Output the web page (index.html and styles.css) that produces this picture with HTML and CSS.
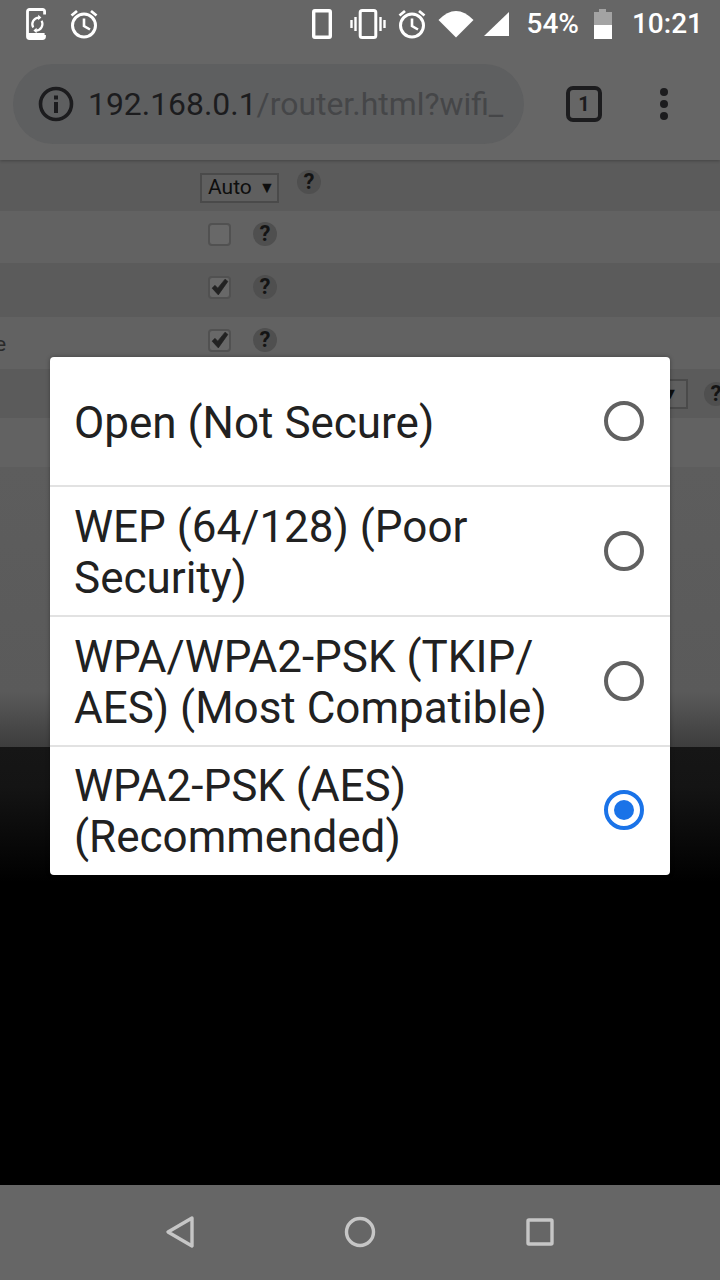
FILE: index.html
```html
<!DOCTYPE html>
<html lang="en">
<head>
<meta charset="utf-8">
<title>Router Wi-Fi security</title>
<link rel="stylesheet" href="styles.css">
</head>
<body>
<div class="screen">
  <header class="top">
    <div class="status">
      <div class="status-left">
        <svg class="ic-sync" viewBox="0 0 20 32" fill="none" stroke="#fff" stroke-width="2.8">
          <path d="M18.6 6.5V3.5a2 2 0 0 0-2-2H3.5a2 2 0 0 0-2 2v25a2 2 0 0 0 2 2h13a2 2 0 0 0 2-2v-1.5"/>
          <path d="M1.5 27.5H18.6" stroke-width="5"/>
          <path d="M7.2 19.5A6.6 6.6 0 0 1 13 9.6" stroke-width="2.2"/>
          <path d="M15.6 12.8A6.6 6.6 0 0 1 9.8 22.6" stroke-width="2.2"/>
          <path d="M12.2 6.8l3.2 2.8-3.2 2.6zM10.6 19.8l-3.2 2.8 3.2 2.6z" fill="#fff" stroke="none"/>
        </svg>
        <svg class="ic-alarm" viewBox="0 0 28 30" fill="none" stroke="#fff" stroke-width="3">
          <circle cx="14" cy="16.5" r="11.5"/>
          <path d="M14 9.5v7.5l6 3.5" stroke-width="2.6"/>
          <path d="M1.5 6.5L7 2M26.5 6.5L21 2" stroke-width="2.8"/>
        </svg>
      </div>
      <div class="status-right">
        <svg class="ic-phone" viewBox="0 0 20 30" fill="none" stroke="#fff" stroke-width="3.4">
          <rect x="1.7" y="1.7" width="16.6" height="26.6" rx="1.2"/>
        </svg>
        <svg class="ic-vibrate" viewBox="0 0 36 30" fill="none" stroke="#fff">
          <rect x="10.2" y="1.5" width="15.6" height="27" rx="2" stroke-width="3"/>
          <path d="M5.5 8v14M1.5 11v8M30.5 8v14M34.5 11v8" stroke-width="2.4"/>
        </svg>
        <svg class="ic-alarm ic-alarm-right" viewBox="0 0 28 30" fill="none" stroke="#fff" stroke-width="3">
          <circle cx="14" cy="16.5" r="11.5"/>
          <path d="M14 9.5v7.5l6 3.5" stroke-width="2.6"/>
          <path d="M1.5 6.5L7 2M26.5 6.5L21 2" stroke-width="2.8"/>
        </svg>
        <svg class="ic-wifi" viewBox="0 0 36 28" fill="#fff">
          <path d="M18 27.5L.5 10Q18-8 35.5 10Z"/>
        </svg>
        <svg class="ic-signal" viewBox="0 0 25 24" fill="#fff">
          <path d="M0 24L25 0V24Z"/>
        </svg>
        <span class="battery-text">54%</span>
        <div class="battery">
          <div class="battery-cap"></div>
          <div class="battery-empty"></div>
          <div class="battery-full"></div>
        </div>
        <span class="clock">10:21</span>
      </div>
    </div>
    <div class="toolbar">
      <div class="omnibox">
        <svg class="ic-info" viewBox="0 0 36 36" fill="none">
          <circle cx="18" cy="18" r="15.5" stroke="#1c1c1e" stroke-width="3.6"/>
          <rect x="16" y="16" width="4" height="11" fill="#1c1c1e"/>
          <rect x="16" y="9.5" width="4" height="4" fill="#1c1c1e"/>
        </svg>
        <span class="url"><span class="url-host">192.168.0.1</span>/router.html?wifi_</span>
      </div>
      <div class="tabs"><span>1</span></div>
      <div class="menu"><i></i><i></i><i></i></div>
    </div>
  </header>

  <main class="page">
    <div class="row row-a row-first">
      <span class="label label-first"></span>
      <span class="select">Auto <b>▼</b></span>
      <span class="help help-raised">?</span>
    </div>
    <div class="row row-b">
      <span class="label"></span>
      <span class="check"></span>
      <span class="help">?</span>
    </div>
    <div class="row row-a row-tall">
      <span class="label"></span>
      <span class="check"><svg class="tick" viewBox="0 0 16 16"><path d="M1 9l2.5-2.5L6 9l6.5-8L15 3 6.5 15Z"/></svg></span>
      <span class="help">?</span>
    </div>
    <div class="row row-b">
      <span class="label">e</span>
      <span class="check"><svg class="tick" viewBox="0 0 16 16"><path d="M1 9l2.5-2.5L6 9l6.5-8L15 3 6.5 15Z"/></svg></span>
      <span class="help">?</span>
    </div>
    <div class="row row-a row-low">
      <span class="label label-wide"></span>
      <span class="select select-far"><b>▼</b></span>
      <span class="help help-far">?</span>
    </div>
    <div class="row row-b row-low"></div>
    <div class="fill"></div>
  </main>

  <div class="backdrop"></div>

  <nav class="nav">
    <svg class="ic-nav" viewBox="0 0 30 34" fill="none" stroke="#c6c6c6" stroke-width="3.4" stroke-linejoin="round">
      <path d="M27 3L3 17l24 14Z"/>
    </svg>
    <svg class="ic-nav" viewBox="0 0 34 34" fill="none" stroke="#c6c6c6" stroke-width="3.4">
      <circle cx="17" cy="17" r="13.5"/>
    </svg>
    <svg class="ic-nav" viewBox="0 0 30 30" fill="none" stroke="#c6c6c6" stroke-width="3.4">
      <rect x="3" y="3" width="24" height="24" rx="1"/>
    </svg>
  </nav>

  <div class="dialog">
    <div class="option option-first">
      <span class="option-text">Open (Not Secure)</span>
      <span class="radio"></span>
    </div>
    <div class="option">
      <span class="option-text">WEP (64/128) (Poor<br>Security)</span>
      <span class="radio"></span>
    </div>
    <div class="option">
      <span class="option-text">WPA/WPA2-PSK (TKIP/<br>AES) (Most Compatible)</span>
      <span class="radio"></span>
    </div>
    <div class="option option-last">
      <span class="option-text">WPA2-PSK (AES)<br>(Recommended)</span>
      <span class="radio radio-on"></span>
    </div>
  </div>
</div>
</body>
</html>
```

FILE: styles.css
```css
* { box-sizing: border-box; }
html, body { margin: 0; padding: 0; }
body { width: 720px; height: 1280px; overflow: hidden; background: #000; font-family: Roboto, "Liberation Sans", sans-serif; }
.screen { position: relative; width: 720px; height: 1280px; display: flex; flex-direction: column; overflow: hidden; }

.top { height: 160px; flex: none; background: #666; position: relative; z-index: 1; box-shadow: 0 1px 3px rgba(0,0,0,.25); }
.status { height: 48px; display: flex; justify-content: space-between; align-items: center; padding: 0 17px 0 26px; color: #fff; }
.status-left, .status-right { display: flex; align-items: center; }
.ic-sync { width: 20px; height: 32px; margin-top: -1px; flex: none; }
.ic-alarm { width: 28px; height: 30px; margin-left: 24px; flex: none; }
.ic-alarm-right { margin-left: 12px; }
.ic-phone { width: 20px; height: 30px; flex: none; }
.ic-vibrate { width: 36px; height: 30px; margin-left: 18px; flex: none; }
.ic-wifi { width: 36px; height: 28px; margin-left: 12px; flex: none; }
.ic-signal { width: 25px; height: 24px; margin-left: 10px; flex: none; }
.battery-text { font-size: 28px; font-weight: 500; margin-left: 18px; line-height: 34px; }
.battery { width: 18px; height: 30px; margin-left: 15px; display: flex; flex-direction: column; align-items: center; }
.battery-cap { width: 7px; height: 3px; background: #a3a3a3; }
.battery-empty { width: 18px; height: 13px; background: #a3a3a3; }
.battery-full { width: 18px; height: 14px; background: #fff; }
.clock { font-size: 28px; font-weight: 500; margin-left: 20px; line-height: 34px; }

.toolbar { height: 112px; display: flex; align-items: flex-start; padding: 16px 0 0 13px; }
.omnibox { width: 511px; height: 80px; border-radius: 40px; background: #5e5f60; display: flex; align-items: center; padding-left: 25px; }
.ic-info { width: 36px; height: 36px; flex: none; }
.url { margin-left: 14px; font-size: 31.9px; color: #454648; white-space: nowrap; line-height: 40px; }
.url-host { color: #1c1c1e; }
.tabs { width: 36px; height: 36px; margin: 22px 0 0 42px; border: 4px solid #1c1c1e; border-radius: 7px; display: flex; align-items: center; justify-content: center; font-size: 20px; font-weight: 700; color: #1c1c1e; }
.menu { margin: 22px 0 0 58px; width: 8px; display: flex; flex-direction: column; gap: 4px; padding-top: 2px; }
.menu i { display: block; width: 8px; height: 8px; border-radius: 50%; background: #1c1c1e; }

.page { height: 587px; flex: none; display: flex; flex-direction: column; background: #5d5d5d; }
.row { height: 52px; flex: none; display: flex; align-items: center; padding-bottom: 6px; color: #222; }
.row-a { background: #5b5b5b; }
.row-b { background: #626262; }
.row-first { height: 51px; align-items: flex-start; padding: 13px 0 0; }
.row-tall { height: 54px; }
.row-low { height: 49px; padding-bottom: 0; }
.label { width: 208px; flex: none; font-size: 21px; color: #2a2a2a; }
.row-b .label { text-indent: -5px; padding-top: 8px; }
.label-first { width: 200px; }
.label-wide { width: 640px; }
.select { height: 30px; width: 79px; flex: none; border: 2px solid #4a4a4a; background: #5f5f5f; display: flex; align-items: center; padding: 0 0 2px 6px; font-size: 21px; color: #0e0e0e; white-space: pre; }
.select b { font-size: 16px; font-weight: 400; margin-left: 2px; }
.select-far { width: 48px; justify-content: flex-end; padding: 0 8px 0 0; }
.check { width: 23px; height: 23px; flex: none; display: flex; align-items: center; justify-content: center; border: 2px solid #515151; border-radius: 4px; background: #686868; }
.tick { width: 18px; height: 18px; flex: none; fill: #222; stroke: #222; stroke-width: .6; }
.help { width: 24px; height: 24px; flex: none; margin-left: 22px; border-radius: 50%; background: #4f4f4f; font-size: 22px; font-weight: 700; line-height: 24px; text-align: center; color: #141414; }
.help-raised { margin-left: 18px; margin-top: -3px; }
.help-far { margin-left: 16px; }
.fill { flex: 1; background: linear-gradient(#5d5d5d 0, #5a5a5a 225px, #3c3c3c 282px); }

.backdrop { flex: 1; background: linear-gradient(#161616 0, #141414 40px, #000 135px); }

.nav { height: 95px; flex: none; background: #666; display: flex; align-items: center; justify-content: space-between; padding: 0 165px 1px; }
.ic-nav { height: 34px; width: 34px; }
.nav .ic-nav:first-child { width: 30px; }
.nav .ic-nav:last-child { width: 30px; height: 30px; }

.dialog { position: absolute; z-index: 2; left: 50px; top: 357px; width: 620px; background: #fff; border-radius: 4px; overflow: hidden; box-shadow: 0 0 4px rgba(0,0,0,.35); }
.option { height: 130px; display: flex; align-items: center; justify-content: space-between; padding: 0 26px 0 24px; border-top: 2px solid #e2e2e2; }
.option-first { height: 128px; border-top: 0; }
.option-last { padding-bottom: 2px; }
.option-text { font-size: 44px; line-height: 51px; color: #212121; padding-top: 4px; }
.radio { width: 40px; height: 40px; flex: none; border-radius: 50%; border: 4px solid #616161; }
.radio-on { border-color: #1a73e8; position: relative; }
.radio-on::after { content: ""; position: absolute; left: 6px; top: 6px; width: 20px; height: 20px; border-radius: 50%; background: #1a73e8; }
```
